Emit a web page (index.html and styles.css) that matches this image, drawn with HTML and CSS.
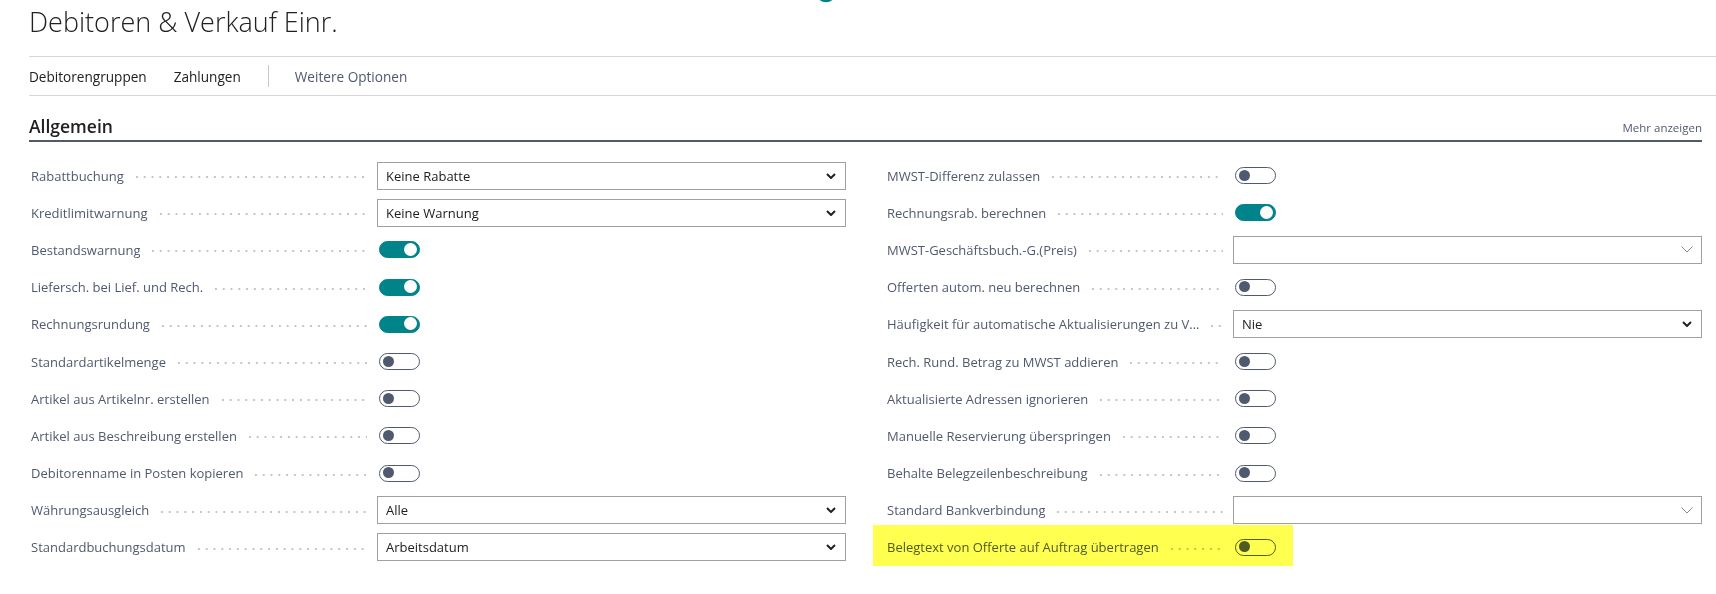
FILE: index.html
```html
<!DOCTYPE html>
<html lang="de">
<head>
  <meta charset="UTF-8">
  <title>Debitoren &amp; Verkauf Einr.</title>
  <link rel="stylesheet" href="styles.css">
</head>
<body>
  <svg class="spinner" width="24" height="24" viewBox="0 0 24 24">
    <circle cx="12" cy="12" r="9" fill="none" stroke="#008489" stroke-width="2.5"></circle>
  </svg>

  <div class="page">
    <h1 class="page-title">Debitoren &amp; Verkauf Einr.</h1>

    <div class="action-bar">
      <span class="action">Debitorengruppen</span>
      <span class="action">Zahlungen</span>
      <span class="action-divider"></span>
      <span class="action action-more">Weitere Optionen</span>
    </div>

    <div class="section">
      <div class="section-header">
        <h2>Allgemein</h2>
        <span class="show-more">Mehr anzeigen</span>
      </div>

      <div class="field-grid">
        <!-- left column -->
        <div class="field-column">
          <div class="field-row">
            <div class="caption"><span class="caption-text">Rabattbuchung</span><span class="leader"></span></div>
            <div class="select"><span>Keine Rabatte</span>
              <svg class="chevron" width="10" height="6" viewBox="0 0 10 6"><path d="M1 1l4 4 4-4" fill="none" stroke="#212121" stroke-width="2"/></svg></div>
          </div>
          <div class="field-row">
            <div class="caption"><span class="caption-text">Kreditlimitwarnung</span><span class="leader"></span></div>
            <div class="select"><span>Keine Warnung</span>
              <svg class="chevron" width="10" height="6" viewBox="0 0 10 6"><path d="M1 1l4 4 4-4" fill="none" stroke="#212121" stroke-width="2"/></svg></div>
          </div>
          <div class="field-row">
            <div class="caption"><span class="caption-text">Bestandswarnung</span><span class="leader"></span></div>
            <div class="value"><span class="toggle on"></span></div>
          </div>
          <div class="field-row">
            <div class="caption"><span class="caption-text">Liefersch. bei Lief. und Rech.</span><span class="leader"></span></div>
            <div class="value"><span class="toggle on"></span></div>
          </div>
          <div class="field-row">
            <div class="caption"><span class="caption-text">Rechnungsrundung</span><span class="leader"></span></div>
            <div class="value"><span class="toggle on"></span></div>
          </div>
          <div class="field-row">
            <div class="caption"><span class="caption-text">Standardartikelmenge</span><span class="leader"></span></div>
            <div class="value"><span class="toggle"></span></div>
          </div>
          <div class="field-row">
            <div class="caption"><span class="caption-text">Artikel aus Artikelnr. erstellen</span><span class="leader"></span></div>
            <div class="value"><span class="toggle"></span></div>
          </div>
          <div class="field-row">
            <div class="caption"><span class="caption-text">Artikel aus Beschreibung erstellen</span><span class="leader"></span></div>
            <div class="value"><span class="toggle"></span></div>
          </div>
          <div class="field-row">
            <div class="caption"><span class="caption-text">Debitorenname in Posten kopieren</span><span class="leader"></span></div>
            <div class="value"><span class="toggle"></span></div>
          </div>
          <div class="field-row">
            <div class="caption"><span class="caption-text">Währungsausgleich</span><span class="leader"></span></div>
            <div class="select"><span>Alle</span>
              <svg class="chevron" width="10" height="6" viewBox="0 0 10 6"><path d="M1 1l4 4 4-4" fill="none" stroke="#212121" stroke-width="2"/></svg></div>
          </div>
          <div class="field-row">
            <div class="caption"><span class="caption-text">Standardbuchungsdatum</span><span class="leader"></span></div>
            <div class="select"><span>Arbeitsdatum</span>
              <svg class="chevron" width="10" height="6" viewBox="0 0 10 6"><path d="M1 1l4 4 4-4" fill="none" stroke="#212121" stroke-width="2"/></svg></div>
          </div>
        </div>

        <!-- right column -->
        <div class="field-column">
          <div class="field-row">
            <div class="caption"><span class="caption-text">MWST-Differenz zulassen</span><span class="leader"></span></div>
            <div class="value"><span class="toggle"></span></div>
          </div>
          <div class="field-row">
            <div class="caption"><span class="caption-text">Rechnungsrab. berechnen</span><span class="leader"></span></div>
            <div class="value"><span class="toggle on"></span></div>
          </div>
          <div class="field-row">
            <div class="caption"><span class="caption-text">MWST-Geschäftsbuch.-G.(Preis)</span><span class="leader"></span></div>
            <div class="select lookup"><span></span>
              <svg class="chevron" width="12" height="7" viewBox="0 0 12 7"><path d="M0.5 0.5l5.5 5.5 5.5-5.5" fill="none" stroke="#8a8a8a" stroke-width="1"/></svg></div>
          </div>
          <div class="field-row">
            <div class="caption"><span class="caption-text">Offerten autom. neu berechnen</span><span class="leader"></span></div>
            <div class="value"><span class="toggle"></span></div>
          </div>
          <div class="field-row">
            <div class="caption"><span class="caption-text">Häufigkeit für automatische Aktualisierungen zu V...</span><span class="leader short"></span></div>
            <div class="select"><span>Nie</span>
              <svg class="chevron" width="10" height="6" viewBox="0 0 10 6"><path d="M1 1l4 4 4-4" fill="none" stroke="#212121" stroke-width="2"/></svg></div>
          </div>
          <div class="field-row">
            <div class="caption"><span class="caption-text">Rech. Rund. Betrag zu MWST addieren</span><span class="leader"></span></div>
            <div class="value"><span class="toggle"></span></div>
          </div>
          <div class="field-row">
            <div class="caption"><span class="caption-text">Aktualisierte Adressen ignorieren</span><span class="leader"></span></div>
            <div class="value"><span class="toggle"></span></div>
          </div>
          <div class="field-row">
            <div class="caption"><span class="caption-text">Manuelle Reservierung überspringen</span><span class="leader"></span></div>
            <div class="value"><span class="toggle"></span></div>
          </div>
          <div class="field-row">
            <div class="caption"><span class="caption-text">Behalte Belegzeilenbeschreibung</span><span class="leader"></span></div>
            <div class="value"><span class="toggle"></span></div>
          </div>
          <div class="field-row">
            <div class="caption"><span class="caption-text">Standard Bankverbindung</span><span class="leader"></span></div>
            <div class="select lookup"><span></span>
              <svg class="chevron" width="12" height="7" viewBox="0 0 12 7"><path d="M0.5 0.5l5.5 5.5 5.5-5.5" fill="none" stroke="#8a8a8a" stroke-width="1"/></svg></div>
          </div>
          <div class="field-row highlighted">
            <div class="caption"><span class="caption-text">Belegtext von Offerte auf Auftrag übertragen</span><span class="leader"></span></div>
            <div class="value"><span class="toggle"></span></div>
          </div>
        </div>
      </div>
    </div>
  </div>
</body>
</html>
```

FILE: styles.css
```css
/* Page */
body {
  margin: 0;
  font-family: "Open Sans", "Noto Sans", sans-serif;
  color: #212121;
  background-color: #fff;
  overflow: hidden;
}

.spinner {
  position: absolute;
  top: -20px;
  left: 814px;
}

.page {
  padding-left: 29px;
}

.page-title {
  margin: 0;
  height: 57px;
  padding-top: 4px;
  box-sizing: border-box;
  font-size: 27px;
  font-weight: 300;
  line-height: 35px;
  border-bottom: 1px solid #d6d6d6;
}

/* Action bar */
.action-bar {
  display: flex;
  align-items: center;
  height: 38px;
  border-bottom: 1px solid #d6d6d6;
  font-size: 13.6px;
}

.action {
  margin-right: 27px;
}

.action-divider {
  width: 1px;
  height: 22px;
  background-color: #c8c8c8;
  margin-right: 26px;
}

.action-more {
  color: #505a6e;
}

/* Section */
.section {
  margin-right: 14px;
}

.section-header {
  display: flex;
  justify-content: space-between;
  align-items: flex-end;
  height: 46px;
  padding-bottom: 2px;
  box-sizing: border-box;
  border-bottom: 2px solid #505a6e;
}

.section-header h2 {
  margin: 0;
  font-size: 17.5px;
  font-weight: 600;
  line-height: 24px;
}

.show-more {
  font-size: 11.5px;
  color: #505a6e;
  line-height: 20px;
}

.field-grid {
  display: grid;
  grid-template-columns: 1fr 1fr;
  column-gap: 39px;
  padding-top: 15px;
}

.field-row {
  position: relative;
  display: flex;
  align-items: center;
  height: 37.2px;
}

.caption {
  display: flex;
  align-items: center;
  flex: 1;
  min-width: 0;
  padding-left: 2px;
  margin-right: 10px;
  font-size: 13px;
  color: #505a6e;
}

.caption-text {
  white-space: nowrap;
  overflow: hidden;
}

.leader {
  flex: 1;
  min-width: 10px;
  height: 4px;
  margin-left: 9px;
  background-image: radial-gradient(circle, #c4c4c4 0.9px, transparent 1.1px);
  background-size: 7.8px 4px;
  background-repeat: repeat-x;
  margin-top: 3px;
}

.leader.short {
  flex: 0 0 14px;
}

.value,
.select {
  width: 469px;
  flex: none;
  box-sizing: border-box;
}

.select {
  display: flex;
  align-items: center;
  justify-content: space-between;
  height: 28px;
  padding: 0 9px 0 8px;
  border: 1px solid #a0a0a0;
  font-size: 13px;
}

.select.lookup {
  padding-right: 8px;
}

.value {
  display: flex;
  align-items: center;
}

/* Toggle switch */
.toggle {
  position: relative;
  display: block;
  width: 41px;
  height: 17px;
  box-sizing: border-box;
  margin-left: 2px;
  border: 1.5px solid #505a6e;
  border-radius: 9px;
}

.toggle::after {
  content: "";
  position: absolute;
  top: 1.5px;
  left: 3px;
  width: 11px;
  height: 11px;
  border-radius: 50%;
  background-color: #505a6e;
}

.toggle.on {
  background-color: #008489;
  border-color: #008489;
}

.toggle.on::after {
  left: auto;
  right: 2px;
  top: 0.5px;
  width: 13px;
  height: 13px;
  background-color: #fff;
}

/* Yellow marker on the last row */
.highlighted::before {
  content: "";
  position: absolute;
  top: -4px;
  bottom: -4px;
  left: -12px;
  width: 420px;
  background-color: #ffff50;
  mix-blend-mode: multiply;
  z-index: 1;
}
```
